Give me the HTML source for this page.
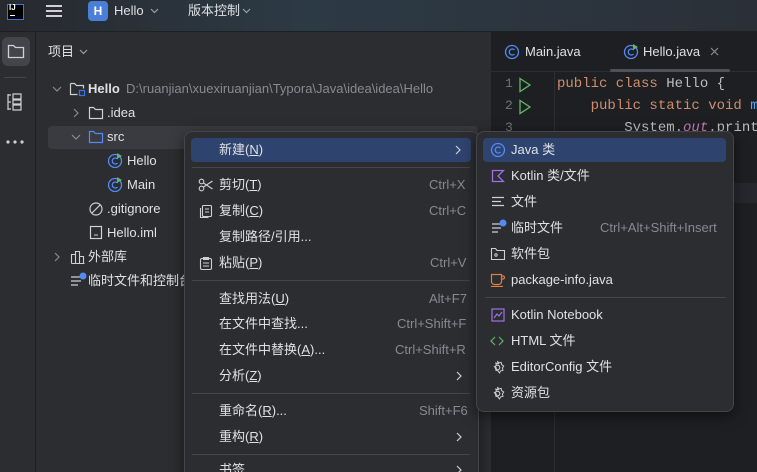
<!DOCTYPE html>
<html><head><meta charset="utf-8"><style>
*{margin:0;padding:0;box-sizing:border-box}
html,body{width:757px;height:472px;overflow:hidden}
body{background:#2b2d30;font-family:"Liberation Sans","Noto Sans CJK SC",sans-serif;font-size:13px;line-height:16px;color:#dfe1e5;position:relative}
.a{position:absolute;white-space:nowrap}
.top{left:0;top:0;width:757px;height:32px;background:linear-gradient(90deg,#27292e,#2c3a45 40%,#2b3038);border-bottom:1px solid #1e1f22}
.strip{left:0;top:32px;width:36px;height:440px;background:#2b2d30;border-right:1px solid #1e1f22}
.editor{left:491px;top:32px;width:266px;height:440px;background:#1e1f22;border-left:1px solid #1e1f22}
.tabs{left:491px;top:32px;width:266px;height:40px;background:#1e1f22;border-bottom:1px solid #2b2d30}
.mono{font-family:"Liberation Mono","DejaVu Sans Mono",monospace;font-size:14px}
.menu{background:#2b2d30;border:1px solid #43454a;border-radius:8px;box-shadow:0 4px 14px rgba(0,0,0,.5)}
.hl{background:#2e436e;border-radius:4px}
.sep{height:1px;background:#43454a}
.sc{color:#868a91}
.dim{color:#868a91}
svg{position:absolute}
</style></head><body>
<div class="a top"></div>
<div class="a" style="left:7px;top:4px;width:17px;height:16px;background:#000;border:1px solid #3574f0"></div>
<div class="a" style="left:9px;top:3px;color:#fff;font-size:8px;line-height:10px;font-weight:bold">IJ</div>
<div class="a" style="left:10px;top:15px;width:5px;height:1px;background:#fff"></div>
<div class="a" style="left:46px;top:5px;width:16px;height:2px;background:#ced0d6"></div>
<div class="a" style="left:46px;top:10px;width:16px;height:2px;background:#ced0d6"></div>
<div class="a" style="left:46px;top:15px;width:16px;height:2px;background:#ced0d6"></div>
<div class="a" style="left:88px;top:1px;width:20px;height:20px;background:#4a7fd8;border-radius:4px;color:#fff;font-weight:bold;font-size:12px;text-align:center;line-height:20px">H</div>
<div class="a" style="left:114px;top:3px">Hello</div>
<svg style="left:150px;top:8px" width="9" height="6"><path d="M1 1l3.5 3.5L8 1" fill="none" stroke="#9da0a8" stroke-width="1.2"/></svg>
<div class="a" style="left:188px;top:3px">版本控制</div>
<svg style="left:242px;top:8px" width="9" height="6"><path d="M1 1l3.5 3.5L8 1" fill="none" stroke="#9da0a8" stroke-width="1.2"/></svg>

<div class="a strip"></div>
<div class="a" style="left:2px;top:37px;width:28px;height:29px;background:#43454a;border-radius:6px"></div>
<svg style="left:7px;top:43px" width="18" height="16"><path d="M1.5 2.5h5l2 2h8v10h-15z" fill="none" stroke="#ced0d6" stroke-width="1.3"/></svg>
<div class="a" style="left:4px;top:77px;width:22px;height:1px;background:#43454a"></div>
<svg style="left:7px;top:93px" width="16" height="18"><path d="M1 1v16M1 2h3M1 9h3M1 16h3M6 1h8v5h-8zM6 7h8v4h-8zM6 12h8v5h-8z" fill="none" stroke="#ced0d6" stroke-width="1.2"/></svg>
<svg style="left:6px;top:140px" width="18" height="4"><circle cx="2" cy="2" r="1.6" fill="#ced0d6"/><circle cx="9" cy="2" r="1.6" fill="#ced0d6"/><circle cx="16" cy="2" r="1.6" fill="#ced0d6"/></svg>

<div class="a" style="left:48px;top:44px">项目</div>
<svg style="left:79px;top:49px" width="9" height="6"><path d="M1 1l3.5 3.5L8 1" fill="none" stroke="#9da0a8" stroke-width="1.2"/></svg>

<div class="a" style="left:48px;top:126px;width:430px;height:23px;background:#393b40;border-radius:4px"></div>
<svg style="left:52px;top:86px" width="10" height="6"><path d="M1 1l4 4 4-4" fill="none" stroke="#868a91" stroke-width="1.2"/></svg>
<svg style="left:69px;top:81px" width="18" height="16"><path d="M1.5 2.5h4l2 2h7v3M1.5 2.5v11h7" fill="none" stroke="#ced0d6" stroke-width="1.2"/><rect x="10.5" y="9.5" width="5" height="5" fill="none" stroke="#3574f0" stroke-width="1.2"/></svg>
<div class="a" style="left:88px;top:81px;font-weight:bold">Hello</div>
<div class="a dim" style="left:126px;top:81px">D:\ruanjian\xuexiruanjian\Typora\Java\idea\idea\Hello</div>

<svg style="left:73px;top:108px" width="6" height="10"><path d="M1 1l4 4-4 4" fill="none" stroke="#868a91" stroke-width="1.2"/></svg>
<svg style="left:88px;top:105px" width="16" height="15"><path d="M1.5 2.5h4l2 2h7v9h-13z" fill="none" stroke="#ced0d6" stroke-width="1.2"/></svg>
<div class="a" style="left:107px;top:105px">.idea</div>

<svg style="left:71px;top:134px" width="10" height="6"><path d="M1 1l4 4 4-4" fill="none" stroke="#868a91" stroke-width="1.2"/></svg>
<svg style="left:88px;top:129px" width="16" height="15"><path d="M1.5 2.5h4l2 2h7v9h-13z" fill="none" stroke="#548af7" stroke-width="1.2"/></svg>
<div class="a" style="left:107px;top:129px">src</div>

<svg style="left:107px;top:152px" width="17" height="17"><circle cx="8" cy="9" r="6.5" fill="none" stroke="#548af7" stroke-width="1.3"/><path d="M10.5 7a3 3 0 1 0 0 4" fill="none" stroke="#548af7" stroke-width="1.3"/><path d="M10 1l5 3-5 3z" fill="#5fb865"/></svg>
<div class="a" style="left:127px;top:153px">Hello</div>
<svg style="left:107px;top:176px" width="17" height="17"><circle cx="8" cy="9" r="6.5" fill="none" stroke="#548af7" stroke-width="1.3"/><path d="M10.5 7a3 3 0 1 0 0 4" fill="none" stroke="#548af7" stroke-width="1.3"/><path d="M10 1l5 3-5 3z" fill="#5fb865"/></svg>
<div class="a" style="left:127px;top:177px">Main</div>

<svg style="left:88px;top:201px" width="16" height="16"><circle cx="8" cy="8" r="6" fill="none" stroke="#ced0d6" stroke-width="1.2"/><path d="M4 12L12 4" stroke="#ced0d6" stroke-width="1.2"/></svg>
<div class="a" style="left:107px;top:201px">.gitignore</div>
<svg style="left:89px;top:225px" width="14" height="16"><rect x="1.5" y="1.5" width="11" height="12" fill="none" stroke="#ced0d6" stroke-width="1.2"/><path d="M5 10h4" stroke="#ced0d6"/></svg>
<div class="a" style="left:107px;top:225px">Hello.iml</div>

<svg style="left:54px;top:252px" width="6" height="10"><path d="M1 1l4 4-4 4" fill="none" stroke="#868a91" stroke-width="1.2"/></svg>
<svg style="left:70px;top:250px" width="16" height="15"><path d="M1.5 13.5h13M1.5 13.5v-9h4v9M5.5 13.5v-12h4v12M9.5 13.5v-7h4v7" fill="none" stroke="#ced0d6" stroke-width="1.1"/></svg>
<div class="a" style="left:88px;top:249px">外部库</div>
<svg style="left:70px;top:272px" width="17" height="16"><path d="M1 5h9M1 9h10M1 13h7" stroke="#ced0d6" stroke-width="1.2"/><circle cx="13" cy="4" r="3.5" fill="#548af7"/></svg>
<div class="a" style="left:88px;top:273px">临时文件和控制台</div>

<div class="a editor"></div>
<div class="a tabs"></div>
<svg style="left:504px;top:44px" width="16" height="16"><circle cx="8" cy="8" r="6.5" fill="none" stroke="#548af7" stroke-width="1.3"/><path d="M10.5 6a3 3 0 1 0 0 4" fill="none" stroke="#548af7" stroke-width="1.3"/></svg>
<div class="a" style="left:525px;top:44px">Main.java</div>
<svg style="left:623px;top:43px" width="17" height="17"><circle cx="8" cy="9" r="6.5" fill="none" stroke="#548af7" stroke-width="1.3"/><path d="M10.5 7a3 3 0 1 0 0 4" fill="none" stroke="#548af7" stroke-width="1.3"/><path d="M10 1l5 3-5 3z" fill="#5fb865"/></svg>
<div class="a" style="left:643px;top:44px">Hello.java</div>
<svg style="left:710px;top:47px" width="9" height="9"><path d="M1 1l7 7M8 1l-7 7" stroke="#868a91" stroke-width="1.2"/></svg>
<div class="a" style="left:610px;top:69px;width:120px;height:3px;background:#4e5157;border-radius:2px"></div>
<div class="a" style="left:554px;top:72px;width:1px;height:400px;background:#2b2d30"></div>
<div class="a" style="left:491px;top:183px;width:266px;height:20px;background:#26282e"></div>
<div class="a mono" style="left:505px;top:73px;color:#6f737a;font-size:13px;line-height:22px">1<br>2<br>3</div>
<svg style="left:518px;top:77px" width="14" height="40"><path d="M2 1.5l10 6.5-10 6.5z M2 23.5l10 6.5-10 6.5z" fill="none" stroke="#5fb865" stroke-width="1.3"/></svg>
<div class="a mono" style="left:557px;top:73px;line-height:22px;color:#bcbec4"><span style="color:#cf8e6d">public class</span> Hello {<br>&nbsp;&nbsp;&nbsp;&nbsp;<span style="color:#cf8e6d">public static void</span> <span style="color:#56a8f5">ma</span><br>&nbsp;&nbsp;&nbsp;&nbsp;&nbsp;&nbsp;&nbsp;&nbsp;System.<i style="color:#c77dbb">out</i>.printl</div>

<!-- context menu -->
<div class="a menu" style="left:184px;top:131px;width:295px;height:360px"></div>
<div class="a hl" style="left:191px;top:138px;width:280px;height:24px"></div>
<div class="a" style="left:219px;top:142px">新建(<u>N</u>)</div>
<svg style="left:455px;top:145px" width="6" height="10"><path d="M1 1l4 4-4 4" fill="none" stroke="#ced0d6" stroke-width="1.2"/></svg>
<div class="a sep" style="left:192px;top:167px;width:278px"></div>
<svg style="left:198px;top:178px" width="16" height="14"><circle cx="3.5" cy="3.5" r="2.3" fill="none" stroke="#ced0d6" stroke-width="1.1"/><circle cx="3.5" cy="10.5" r="2.3" fill="none" stroke="#ced0d6" stroke-width="1.1"/><path d="M5.5 5l9 6M5.5 9l9-6" stroke="#ced0d6" stroke-width="1.1"/></svg>
<div class="a" style="left:219px;top:177px">剪切(<u>T</u>)</div><div class="a sc" style="left:429px;top:177px">Ctrl+X</div>
<svg style="left:199px;top:204px" width="14" height="15"><rect x="3.5" y="1.5" width="9" height="11" rx="1" fill="none" stroke="#ced0d6" stroke-width="1.1"/><path d="M1.5 4v9.5h8M6 5h4M6 8h4" stroke="#ced0d6" fill="none" stroke-width="1.1"/></svg>
<div class="a" style="left:219px;top:203px">复制(<u>C</u>)</div><div class="a sc" style="left:429px;top:203px">Ctrl+C</div>
<div class="a" style="left:219px;top:229px">复制路径/引用...</div>
<svg style="left:199px;top:256px" width="14" height="15"><rect x="1.5" y="2.5" width="11" height="11" rx="1.5" fill="none" stroke="#ced0d6" stroke-width="1.1"/><path d="M4.5 1.5h5v2h-5zM4 7h6M4 10h6" stroke="#ced0d6" fill="none" stroke-width="1.1"/></svg>
<div class="a" style="left:219px;top:255px">粘贴(<u>P</u>)</div><div class="a sc" style="left:430px;top:255px">Ctrl+V</div>
<div class="a sep" style="left:192px;top:280px;width:278px"></div>
<div class="a" style="left:219px;top:291px">查找用法(<u>U</u>)</div><div class="a sc" style="left:429px;top:291px">Alt+F7</div>
<div class="a" style="left:219px;top:316px">在文件中查找...</div><div class="a sc" style="left:397px;top:316px">Ctrl+Shift+F</div>
<div class="a" style="left:219px;top:342px">在文件中替换(<u>A</u>)...</div><div class="a sc" style="left:395px;top:342px">Ctrl+Shift+R</div>
<div class="a" style="left:219px;top:368px">分析(<u>Z</u>)</div>
<svg style="left:456px;top:371px" width="6" height="10"><path d="M1 1l4 4-4 4" fill="none" stroke="#ced0d6" stroke-width="1.2"/></svg>
<div class="a sep" style="left:192px;top:393px;width:278px"></div>
<div class="a" style="left:219px;top:403px">重命名(<u>R</u>)...</div><div class="a sc" style="left:419px;top:403px">Shift+F6</div>
<div class="a" style="left:219px;top:429px">重构(<u>R</u>)</div>
<svg style="left:456px;top:432px" width="6" height="10"><path d="M1 1l4 4-4 4" fill="none" stroke="#ced0d6" stroke-width="1.2"/></svg>
<div class="a sep" style="left:192px;top:454px;width:278px"></div>
<div class="a" style="left:219px;top:462px">书签</div>
<svg style="left:456px;top:465px" width="6" height="10"><path d="M1 1l4 4-4 4" fill="none" stroke="#ced0d6" stroke-width="1.2"/></svg>

<!-- submenu -->
<div class="a menu" style="left:476px;top:131px;width:258px;height:281px"></div>
<div class="a hl" style="left:483px;top:138px;width:243px;height:24px"></div>
<svg style="left:490px;top:142px" width="16" height="16"><circle cx="8" cy="8" r="6.5" fill="none" stroke="#548af7" stroke-width="1.3"/><path d="M10.5 6a3 3 0 1 0 0 4" fill="none" stroke="#548af7" stroke-width="1.3"/></svg>
<div class="a" style="left:511px;top:142px">Java 类</div>
<svg style="left:491px;top:169px" width="14" height="14"><path d="M1.5 1.5h11l-5.5 5.5 5.5 5.5h-11z" fill="none" stroke="#a36ee8" stroke-width="1.3"/></svg>
<div class="a" style="left:511px;top:168px">Kotlin 类/文件</div>
<svg style="left:491px;top:196px" width="14" height="12"><path d="M1 1.5h12M1 5.5h9M1 9.5h12" stroke="#ced0d6" stroke-width="1.2"/></svg>
<div class="a" style="left:511px;top:194px">文件</div>
<svg style="left:491px;top:219px" width="16" height="15"><path d="M1 5h8M1 9h9M1 13h6" stroke="#ced0d6" stroke-width="1.2"/><circle cx="12" cy="4" r="3.5" fill="#548af7"/></svg>
<div class="a" style="left:511px;top:220px">临时文件</div><div class="a sc" style="left:600px;top:220px">Ctrl+Alt+Shift+Insert</div>
<svg style="left:490px;top:247px" width="16" height="14"><path d="M1.5 1.5h4l1.5 2h7.5v9h-13z" fill="none" stroke="#ced0d6" stroke-width="1.1"/><circle cx="6" cy="8" r="1.2" fill="none" stroke="#ced0d6"/></svg>
<div class="a" style="left:511px;top:246px">软件包</div>
<svg style="left:490px;top:273px" width="16" height="14"><path d="M1.5 1.5h10v7a3 3 0 0 1-3 3h-4a3 3 0 0 1-3-3zM11.5 3h1.5a1.5 1.5 0 0 1 0 3h-1.5M1 13.5h12" fill="none" stroke="#e07d41" stroke-width="1.2"/></svg>
<div class="a" style="left:511px;top:272px">package-info.java</div>
<div class="a sep" style="left:485px;top:297px;width:241px"></div>
<svg style="left:491px;top:308px" width="14" height="14"><rect x="1" y="1" width="12" height="12" fill="none" stroke="#a36ee8" stroke-width="1.2"/><path d="M3 10l3-4 2 2 3-4" fill="none" stroke="#a36ee8" stroke-width="1.2"/></svg>
<div class="a" style="left:511px;top:307px">Kotlin Notebook</div>
<svg style="left:490px;top:336px" width="14" height="10"><path d="M5 1L1 5l4 4M9 1l4 4-4 4" fill="none" stroke="#5fb865" stroke-width="1.2"/></svg>
<div class="a" style="left:511px;top:333px">HTML 文件</div>
<svg style="left:490px;top:360px" width="15" height="15"><circle cx="7.5" cy="7.5" r="2.3" fill="none" stroke="#ced0d6" stroke-width="1.1"/><path d="M7.5 1l1.3 2 2.3-.6.6 2.3 2 1.3-1.3 2 .6 2.3-2.3.6-1.3 2-1.3-2-2.3-.6.6-2.3-2-1.3 2-1.3-.6-2.3 2.3.6z" fill="none" stroke="#ced0d6" stroke-width="1"/></svg>
<div class="a" style="left:511px;top:359px">EditorConfig 文件</div>
<svg style="left:490px;top:386px" width="15" height="15"><circle cx="7.5" cy="7.5" r="2.3" fill="none" stroke="#ced0d6" stroke-width="1.1"/><path d="M7.5 1l1.3 2 2.3-.6.6 2.3 2 1.3-1.3 2 .6 2.3-2.3.6-1.3 2-1.3-2-2.3-.6.6-2.3-2-1.3 2-1.3-.6-2.3 2.3.6z" fill="none" stroke="#ced0d6" stroke-width="1"/></svg>
<div class="a" style="left:511px;top:385px">资源包</div>
</body></html>
